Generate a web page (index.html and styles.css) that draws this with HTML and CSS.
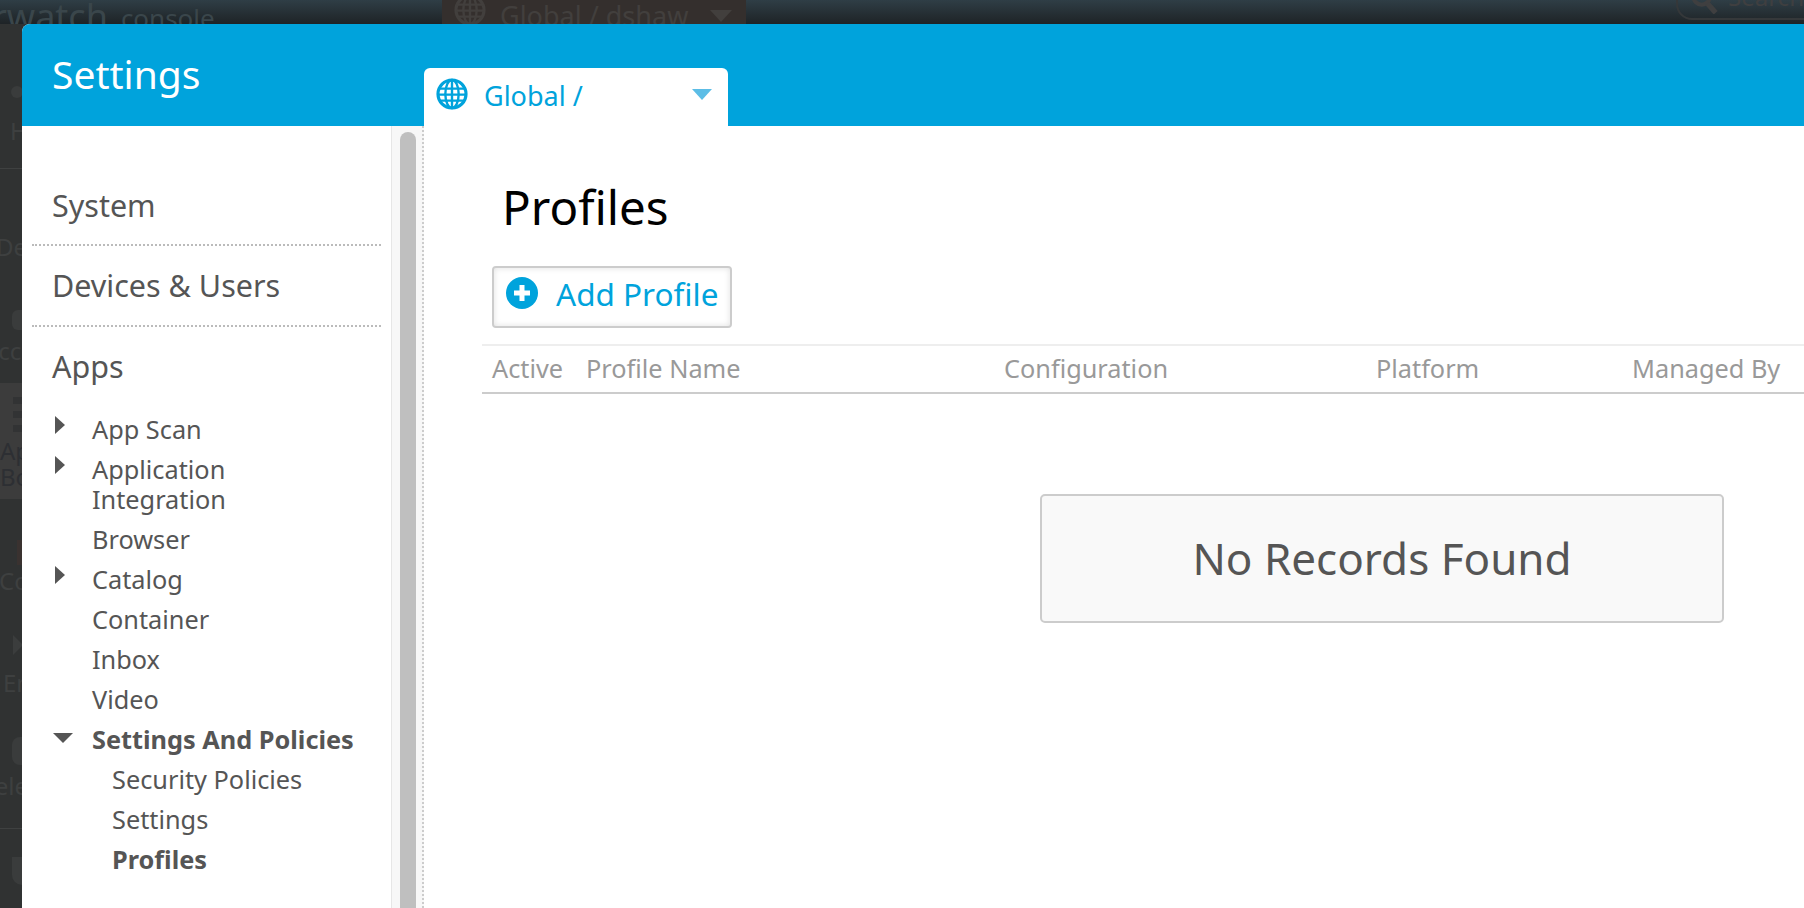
FILE: index.html
```html
<!DOCTYPE html>
<html lang="en">
<head>
    <meta charset="UTF-8">
    <meta name="viewport" content="width=device-width, initial-scale=1.0">
    <title>Settings</title>
    <link rel="stylesheet" href="styles.css">
</head>
<body>
    <svg class="defs" width="0" height="0">
        <symbol id="globe" viewBox="0 0 24 24">
            <circle cx="12" cy="12" r="10.5" fill="none" stroke="currentColor" stroke-width="2.4"></circle>
            <ellipse cx="12" cy="12" rx="5" ry="10.5" fill="none" stroke="currentColor" stroke-width="1.8"></ellipse>
            <path d="M12 1.5v21M2 8h20M2 12.5h20M3 17h18" fill="none" stroke="currentColor" stroke-width="1.8"></path>
        </symbol>
    </svg>

    <div class="backdrop-top">
        <span class="brand">rwatch</span>
        <span class="brand-sub">console</span>
        <span class="org-picker">
            <svg class="org-globe" viewBox="0 0 24 24"><use href="#globe"></use></svg>
            Global / dshaw
            <span class="org-caret"></span>
        </span>
        <span class="search-box">
            <svg class="search-icon" viewBox="0 0 24 24">
                <circle cx="10" cy="9" r="7" fill="none" stroke="currentColor" stroke-width="3.5"></circle>
                <path d="M15 15l7 8" stroke="currentColor" stroke-width="4.5"></path>
            </svg>
            Search
        </span>
    </div>
    <div class="backdrop-side">
        <div class="side-item side-hub">
            <div class="side-icon icon-dot"></div>
            <div class="side-label">Hub</div>
        </div>
        <div class="side-item side-devices">
            <div class="side-label label-devices">Devices</div>
        </div>
        <div class="side-item side-accounts">
            <div class="side-icon icon-head"></div>
            <div class="side-label label-cut">Accounts</div>
        </div>
        <div class="side-item side-apps">
            <div class="side-icon icon-bars"></div>
            <div class="side-label label-apps">Apps &amp;<br>Books</div>
        </div>
        <div class="side-item side-content">
            <div class="side-icon icon-doc"></div>
            <div class="side-label label-content">Content</div>
        </div>
        <div class="side-item side-email">
            <div class="side-icon icon-play"></div>
            <div class="side-label label-email">Email</div>
        </div>
        <div class="side-item side-telecom">
            <div class="side-icon icon-phone"></div>
            <div class="side-label label-cut">Telecom</div>
        </div>
        <div class="side-item side-last">
            <div class="side-icon icon-moon"></div>
        </div>
    </div>

    <div class="modal">
        <header class="modal-head">
            <h2 class="modal-title">Settings</h2>
            <div class="scope-tab">
                <svg class="scope-globe" viewBox="0 0 24 24"><use href="#globe"></use></svg>
                <span class="scope-name">Global /</span>
                <span class="scope-caret"></span>
            </div>
        </header>
        <div class="modal-body">
            <nav class="nav">
                <div class="nav-group nav-first nav-dotted">System</div>
                <div class="nav-group nav-dotted">Devices &amp; Users</div>
                <div class="nav-group">Apps</div>
                <ul class="nav-list">
                    <li class="nav-item"><span class="arrow-right"></span>App Scan</li>
                    <li class="nav-item"><span class="arrow-right"></span>Application<br>Integration</li>
                    <li class="nav-item">Browser</li>
                    <li class="nav-item"><span class="arrow-right"></span>Catalog</li>
                    <li class="nav-item">Container</li>
                    <li class="nav-item">Inbox</li>
                    <li class="nav-item">Video</li>
                    <li class="nav-item nav-bold"><span class="arrow-down"></span>Settings And Policies</li>
                    <li class="nav-item nav-sub">Security Policies</li>
                    <li class="nav-item nav-sub">Settings</li>
                    <li class="nav-item nav-sub nav-bold">Profiles</li>
                </ul>
            </nav>
            <div class="scroll-track"><div class="scroll-thumb"></div></div>
            <main class="content">
                <h1 class="page-title">Profiles</h1>
                <button class="add-btn" type="button">
                    <svg class="add-icon" viewBox="0 0 32 32">
                        <circle cx="16" cy="16" r="16" fill="#00a3dc"></circle>
                        <path d="M16 8v16M8 16h16" stroke="#fff" stroke-width="5" fill="none"></path>
                    </svg>
                    Add Profile
                </button>
                <div class="table-head">
                    <span class="col-active">Active</span>
                    <span class="col-name">Profile Name</span>
                    <span class="col-config">Configuration</span>
                    <span class="col-platform">Platform</span>
                    <span class="col-managed">Managed By</span>
                </div>
                <div class="no-records">No Records Found</div>
            </main>
        </div>
    </div>
</body>
</html>
```
FILE: styles.css
```css
html, body {
    margin: 0;
    height: 908px;
    overflow: hidden;
}

body {
    font-family: "Noto Sans", "Open Sans", sans-serif;
    background-color: #303232;
    position: relative;
}

.defs {
    position: absolute;
}

/* dimmed page behind the dialog */
.backdrop-top {
    height: 24px;
    display: flex;
    align-items: flex-start;
    background: linear-gradient(#2f3e46, #1e2326);
    color: #3a464b;
    overflow: hidden;
}

.brand {
    font-size: 36px;
    line-height: 34px;
    margin-left: -8px;
}

.brand-sub {
    font-size: 26px;
    line-height: 36px;
    margin-left: 13px;
}

.org-picker {
    position: absolute;
    left: 442px;
    top: 0;
    display: flex;
    align-items: flex-start;
    height: 24px;
    width: 304px;
    box-sizing: border-box;
    padding-left: 12px;
    overflow: hidden;
    background-color: #342f2d;
    color: #423f3d;
    font-size: 27px;
    line-height: 32px;
}

.org-globe {
    width: 32px;
    height: 32px;
    margin: -6px 14px 0 0;
}

.org-caret {
    margin: 10px 0 0 22px;
    border-left: 11px solid transparent;
    border-right: 11px solid transparent;
    border-top: 12px solid #423f3d;
}

.search-box {
    position: absolute;
    left: 1676px;
    top: -30px;
    width: 160px;
    height: 50px;
    box-sizing: border-box;
    padding: 10px 0 0 50px;
    border: 2px solid #35383a;
    border-radius: 16px;
    color: #3f3f40;
    font-size: 24px;
    line-height: 30px;
}

.search-icon {
    position: absolute;
    left: 12px;
    top: 14px;
    width: 28px;
    height: 28px;
}

.backdrop-side {
    height: 884px;
    overflow: hidden;
    color: #3e4040;
}

.side-item {
    box-sizing: border-box;
    overflow: hidden;
    white-space: nowrap;
}

.side-label {
    font-size: 24px;
    line-height: 28px;
}

.side-icon {
    background-color: #3a3c3c;
}

.side-hub {
    height: 145px;
    padding-top: 62px;
    border-bottom: 1px solid #3f4141;
}

.side-hub .side-label {
    margin: 19px 0 0 10px;
}

.side-devices {
    height: 131px;
    padding-top: 64px;
}

.label-devices {
    margin-left: -4px;
}

.side-accounts {
    height: 83px;
    padding-top: 10px;
}

.label-cut {
    margin: 7px 0 0 -17px;
}

.side-apps {
    height: 116px;
    padding-top: 14px;
    background-color: #3c3c3c;
}

.label-apps {
    margin: 6px 0 0 0;
    color: #2d2f33;
    line-height: 26px;
}

.side-content {
    height: 121px;
    padding-top: 41px;
}

.label-content {
    margin: 2px 0 0 -1px;
}

.side-email {
    height: 110px;
    padding-top: 15px;
}

.label-email {
    margin: 14px 0 0 3px;
}

.side-telecom {
    height: 99px;
    padding-top: 7px;
    border-bottom: 1px solid #3f4141;
}

.side-last {
    height: 60px;
    padding-top: 28px;
}

.icon-dot {
    width: 12px;
    height: 12px;
    margin-left: 11px;
    border-radius: 50%;
}

.icon-head {
    width: 12px;
    height: 20px;
    margin-left: 12px;
    border-radius: 6px 0 0 6px;
}

.icon-bars {
    width: 10px;
    height: 35px;
    margin-left: 13px;
    background: repeating-linear-gradient(#323334 0, #323334 7px, transparent 7px, transparent 14px);
}

.icon-doc {
    width: 6px;
    height: 25px;
    margin-left: 17px;
    background-color: #3a3230;
}

.icon-play {
    width: 0;
    height: 0;
    margin-left: 13px;
    background-color: transparent;
    border-top: 10px solid transparent;
    border-bottom: 10px solid transparent;
    border-left: 10px solid #3b3d3d;
}

.icon-phone {
    width: 10px;
    height: 28px;
    margin-left: 12px;
    border-radius: 8px 0 0 8px;
}

.icon-moon {
    width: 10px;
    height: 28px;
    margin-left: 12px;
    border-radius: 0 0 0 10px;
}

/* dialog */
.modal {
    position: absolute;
    left: 22px;
    top: 24px;
    width: 1782px;
    height: 884px;
    background-color: #fff;
    border-top-left-radius: 8px;
    overflow: hidden;
}

.modal-head {
    height: 102px;
    background-color: #00a3dc;
    display: flex;
    align-items: flex-end;
    position: relative;
}

.modal-title {
    position: absolute;
    left: 30px;
    top: 27px;
    margin: 0;
    color: #fff;
    font-size: 39px;
    font-weight: 400;
    line-height: 46px;
}

.scope-tab {
    margin-left: 402px;
    width: 304px;
    height: 58px;
    box-sizing: border-box;
    padding: 10px 16px 0 12px;
    background-color: #fff;
    border-radius: 6px 6px 0 0;
    display: flex;
    align-items: flex-start;
    color: #00a3dc;
}

.scope-globe {
    width: 32px;
    height: 32px;
}

.scope-name {
    margin-left: 16px;
    font-size: 27px;
    line-height: 36px;
}

.scope-caret {
    margin-left: auto;
    margin-top: 11px;
    border-left: 10px solid transparent;
    border-right: 10px solid transparent;
    border-top: 11px solid #5cbde6;
}

.modal-body {
    display: flex;
    height: 782px;
}

.nav {
    width: 370px;
    flex-shrink: 0;
    box-sizing: border-box;
    padding: 0 10px;
    border-right: 1px solid #e6e6e6;
    color: #555;
}

.nav-group {
    height: 81px;
    padding: 19px 0 0 20px;
    box-sizing: border-box;
    font-size: 30.5px;
    line-height: 40px;
}

.nav-first {
    height: 120px;
    padding-top: 59px;
}

.nav-dotted {
    border-bottom: 2px dotted #bbb;
}

.nav-list {
    list-style: none;
    margin: 6px 0 0;
    padding: 0;
}

.nav-item {
    position: relative;
    padding-left: 60px;
    margin-bottom: 10px;
    font-size: 25.3px;
    line-height: 30px;
}

.nav-sub {
    padding-left: 80px;
}

.nav-bold {
    font-weight: 700;
}

.arrow-right {
    position: absolute;
    left: 23px;
    top: 2px;
    border-top: 9px solid transparent;
    border-bottom: 9px solid transparent;
    border-left: 10px solid #555;
}

.arrow-down {
    position: absolute;
    left: 21px;
    top: 9px;
    border-left: 10px solid transparent;
    border-right: 10px solid transparent;
    border-top: 10px solid #555;
}

.scroll-track {
    width: 32px;
    flex-shrink: 0;
    box-sizing: border-box;
    padding: 6px 0 0 8px;
    background-color: #f7f7f7;
    border-right: 2px dotted #ccc;
}

.scroll-thumb {
    height: 100%;
    width: 16px;
    background-color: #bfbfbf;
    border-radius: 8px 8px 0 0;
}

.content {
    flex: 1;
    padding-left: 58px;
    min-width: 0;
}

.page-title {
    margin: 0;
    height: 140px;
    box-sizing: border-box;
    padding: 48px 0 0 20px;
    color: #000;
    font-size: 47.5px;
    font-weight: 400;
    line-height: 66px;
}

.add-btn {
    display: flex;
    align-items: center;
    width: 240px;
    height: 62px;
    margin-left: 10px;
    padding: 0 0 8px 12px;
    box-sizing: border-box;
    background-color: #fff;
    border: 2px solid #ccc;
    border-radius: 4px;
    box-shadow: inset 0 0 6px rgba(0, 0, 0, 0.12);
    color: #00a3dc;
    font-family: inherit;
    font-size: 31.5px;
}

.add-icon {
    width: 32px;
    height: 32px;
    margin-right: 18px;
}

.table-head {
    position: relative;
    height: 50px;
    margin-top: 16px;
    box-sizing: border-box;
    border-top: 2px solid #eee;
    border-bottom: 2px solid #ccc;
    color: #999;
    font-size: 25.3px;
    line-height: 44px;
}

.table-head span {
    position: absolute;
    top: 0;
}

.col-active { left: 10px; }
.col-name { left: 104px; }
.col-config { left: 522px; }
.col-platform { left: 894px; }
.col-managed { left: 1150px; }

.no-records {
    width: 684px;
    height: 129px;
    margin: 100px 0 0 558px;
    box-sizing: border-box;
    background-color: #f9f9f9;
    border: 2px solid #ccc;
    border-radius: 5px;
    color: #555;
    font-size: 44px;
    line-height: 125px;
    text-align: center;
}
```
